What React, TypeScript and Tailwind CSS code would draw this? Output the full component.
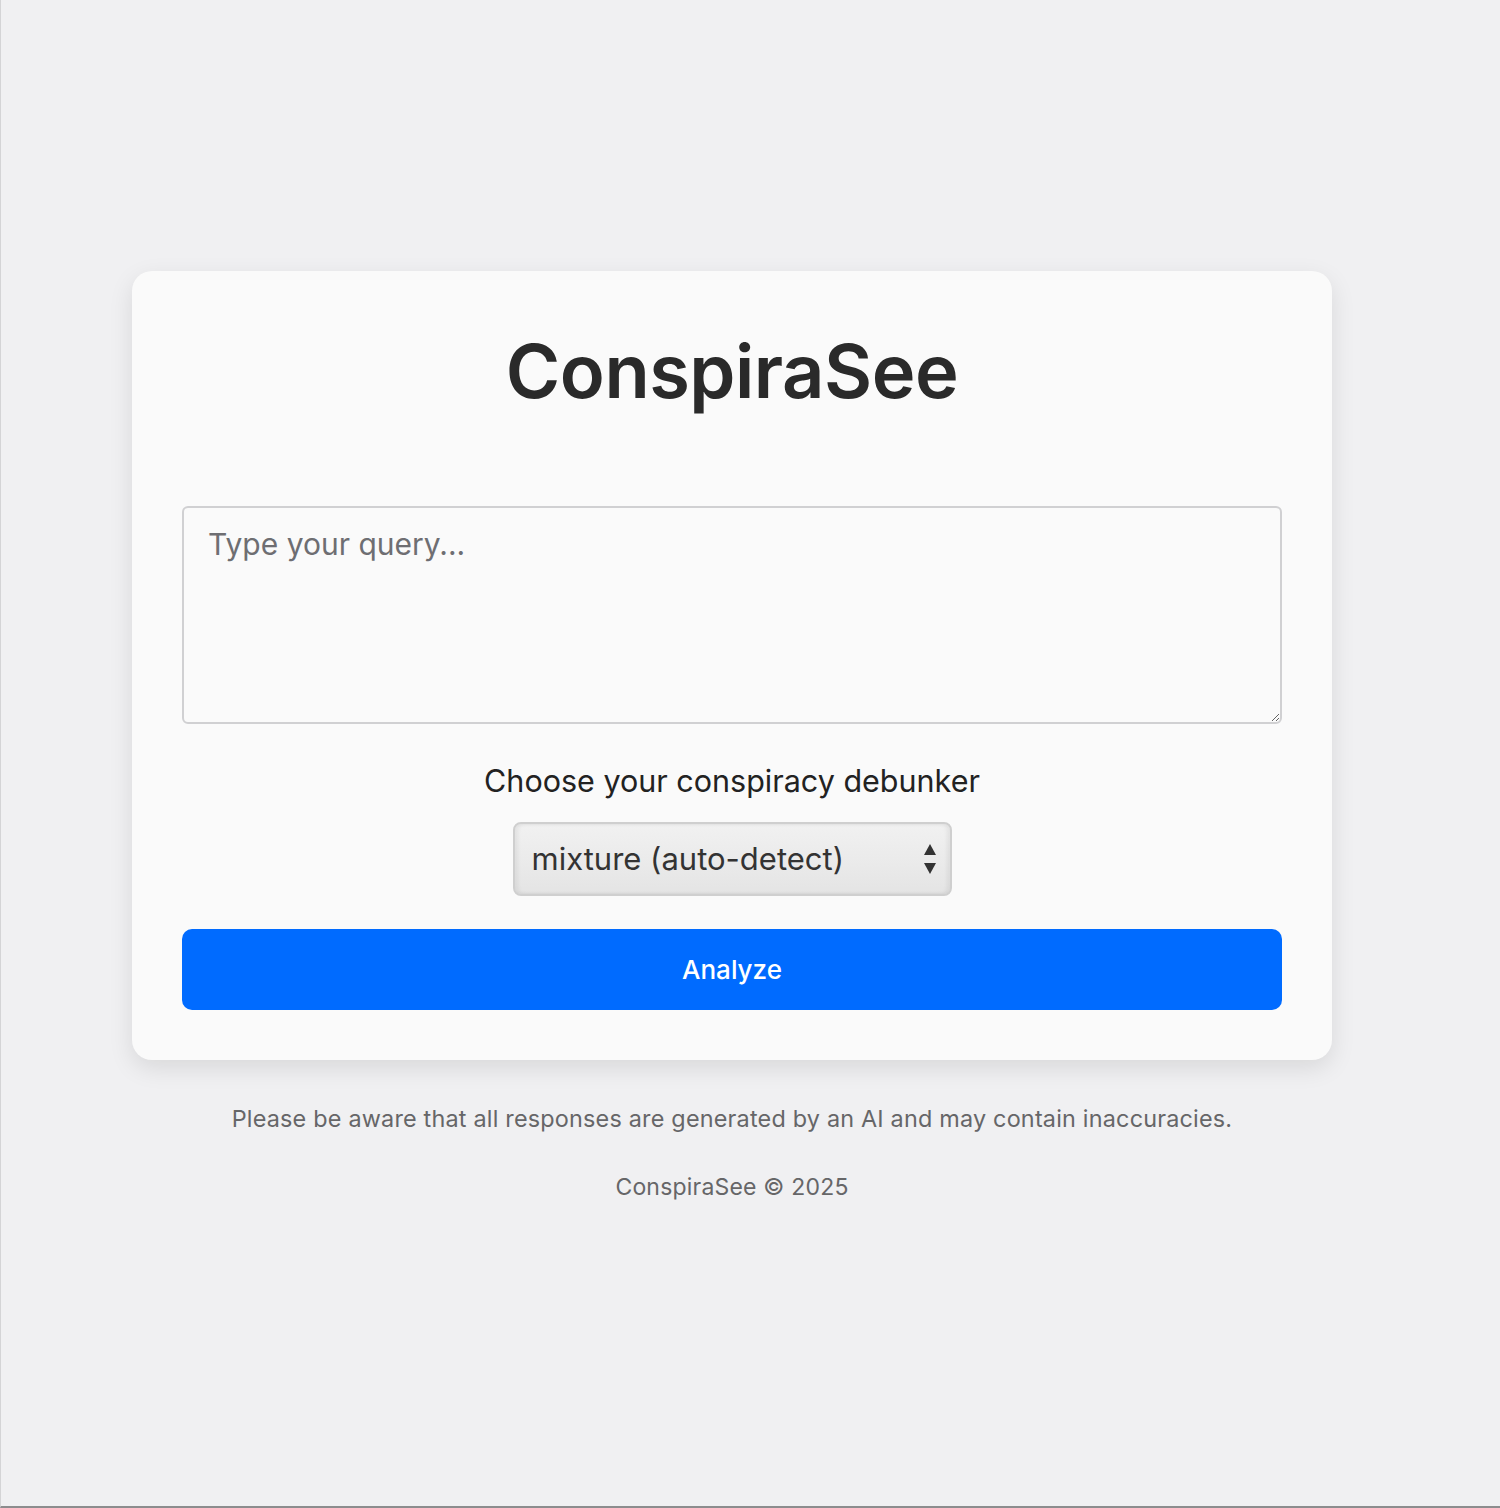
import React, { useState } from 'react';

const debunkers = ['mixture (auto-detect)', 'scientist', 'historian', 'journalist'];

const App: React.FC = () => {
  const [query, setQuery] = useState('');
  const [debunker, setDebunker] = useState(debunkers[0]);

  return (
    <div
      className="min-h-[1508px] w-full bg-[#f0f0f2] border-l border-[#d4d4d6] border-b-2 border-b-[#8c8c8e]"
      style={{ fontFamily: 'Inter, "Noto Sans", sans-serif' }}
    >
      <div className="ml-[131px] w-[1200px] pt-[271px]">
        <div className="bg-[#fafafa] rounded-[20px] px-[50px] pt-[52px] pb-[50px] shadow-[0_8px_24px_rgba(0,0,0,0.10)]">
          <h1 className="text-center text-[74px] leading-[96px] font-semibold text-[#2a2a2a] tracking-[-0.5px]">
            ConspiraSee
          </h1>

          <textarea
            className="mt-[87px] block w-full h-[218px] rounded-[6px] border-2 border-[#d0d0d2] bg-[#fafafa] px-[24px] py-[14px] text-[30px] text-[#2a2a2a] placeholder:text-[#6e6e72] focus:outline-none"
            placeholder="Type your query..."
            value={query}
            onChange={(e) => setQuery(e.target.value)}
          />

          <div className="mt-[39px] text-center text-[30.5px] leading-[36px] text-[#222]">
            Choose your conspiracy debunker
          </div>

          <div className="mt-[23px] flex justify-center">
            <div className="relative w-[439px] h-[74px]">
              <select
                className="appearance-none w-full h-full rounded-[8px] border-2 border-[#cfcfcf] bg-gradient-to-b from-[#f1f1f1] via-[#ebebeb] to-[#e4e4e4] pl-[17px] pr-[50px] text-[31px] text-[#333] shadow-[inset_3px_0_4px_rgba(0,0,0,0.06),inset_-3px_0_4px_rgba(0,0,0,0.06)] focus:outline-none"
                value={debunker}
                onChange={(e) => setDebunker(e.target.value)}
              >
                {debunkers.map(d => (
                  <option key={d} value={d}>{d}</option>
                ))}
              </select>
              <svg className="pointer-events-none absolute right-[14px] top-[21px]" width="16" height="32" viewBox="0 0 16 32">
                <path d="M8 1 L14 12 L2 12 Z" fill="#333" />
                <path d="M8 31 L14 20 L2 20 Z" fill="#333" />
              </svg>
            </div>
          </div>

          <button className="mt-[33px] block w-full h-[81px] rounded-[10px] bg-[#006bff] text-white text-[26px] font-medium hover:bg-[#005ee0]">
            Analyze
          </button>
        </div>

        <p className="mt-[45px] text-center text-[23.4px] leading-[28px] text-[#666668] tracking-[0.2px]">
          Please be aware that all responses are generated by an AI and may contain inaccuracies.
        </p>
        <p className="mt-[40px] text-center text-[23px] leading-[28px] text-[#666668] tracking-[0.2px]">
          ConspiraSee © 2025
        </p>
      </div>
    </div>
  );
};

export default App;
